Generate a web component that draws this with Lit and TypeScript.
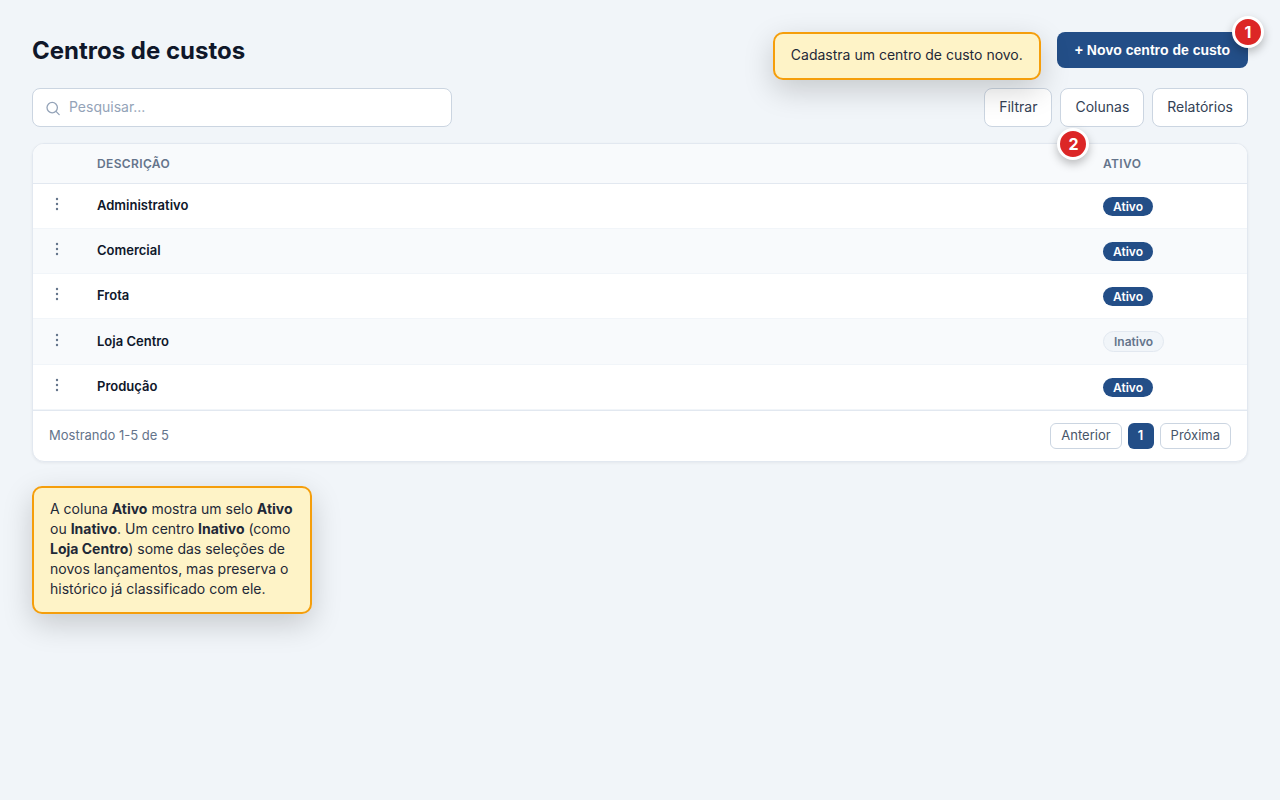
import { LitElement, html, css } from "lit";
import { customElement, state } from "lit/decorators.js";

interface CostCenter {
  name: string;
  active: boolean;
}

@customElement("app-root")
export class AppRoot extends LitElement {
  @state() private rows: CostCenter[] = [
    { name: "Administrativo", active: true },
    { name: "Comercial", active: true },
    { name: "Frota", active: true },
    { name: "Loja Centro", active: false },
    { name: "Produção", active: true },
  ];

  static styles = css`
    :host {
      display: block;
      box-sizing: border-box;
      min-height: 100vh;
      padding: 32px;
      background: #f1f5f9;
      color: #0f172a;
      font-family: Inter, "Liberation Sans", sans-serif;
      font-size: 14px;
      line-height: 20px;
    }
    *,
    *::before {
      box-sizing: border-box;
    }
    button,
    input {
      font: inherit;
      margin: 0;
    }
    button {
      cursor: pointer;
    }
    .header,
    .toolbar,
    .footer {
      display: flex;
      align-items: center;
      justify-content: space-between;
    }
    .header {
      align-items: flex-start;
      margin-bottom: 18px;
    }
    h1 {
      margin: 0;
      font-size: 24px;
      line-height: 38px;
      font-weight: 700;
    }
    .anchor {
      position: relative;
      display: flex;
    }
    .primary {
      height: 36px;
      padding: 0 18px;
      border: 0;
      border-radius: 8px;
      background: #234e87;
      color: #fff;
      font-family: "Liberation Sans", Arial, sans-serif;
      font-weight: 600;
    }
    .toolbar {
      margin-bottom: 16px;
      gap: 16px;
    }
    .search {
      display: flex;
      align-items: center;
      gap: 8px;
      flex: 0 1 420px;
      height: 39px;
      padding: 0 12px;
      border: 1px solid #cbd5e1;
      border-radius: 8px;
      background: #fff;
    }
    .search svg {
      flex: none;
      color: #94a3b8;
    }
    .search input {
      flex: 1;
      min-width: 0;
      padding: 0 0 2px;
      border: 0;
      outline: 0;
      background: none;
      color: #0f172a;
    }
    .search input::placeholder {
      color: #94a3b8;
      opacity: 1;
    }
    .actions {
      display: flex;
      gap: 8px;
    }
    .secondary {
      height: 39px;
      padding: 0 14px 2px;
      border: 1px solid #cbd5e1;
      border-radius: 8px;
      background: #fff;
      color: #334155;
    }
    .card {
      overflow: hidden;
      border: 1px solid #e2e8f0;
      border-radius: 12px;
      background: #fff;
      box-shadow: 0 1px 3px rgba(15, 23, 42, 0.06);
    }
    table {
      width: 100%;
      border-collapse: separate;
      border-spacing: 0;
      table-layout: fixed;
    }
    th,
    td {
      padding: 12px 16px;
      text-align: left;
      vertical-align: middle;
    }
    th {
      height: 40px;
      padding: 0 16px;
      border-bottom: 1px solid #e2e8f0;
      background: #f8fafc;
      color: #64748b;
      font-size: 12px;
      line-height: 16px;
      font-weight: 600;
      letter-spacing: 0.03em;
      text-transform: uppercase;
    }
    td {
      height: 45px;
      border-bottom: 1px solid #f1f5f9;
    }
    tbody tr:nth-child(even) td {
      background: #f8fafc;
    }
    .col-menu {
      width: 48px;
    }
    .col-status {
      width: 160px;
    }
    td.menu {
      padding: 0;
      text-align: center;
    }
    .dots {
      display: inline-flex;
      padding: 4px 8px 8px;
      border: 0;
      background: none;
      color: #64748b;
    }
    td.name {
      padding-bottom: 14px;
      font-size: 13px;
      line-height: 18px;
      font-weight: 600;
    }
    .pill {
      display: block;
      width: fit-content;
      padding: 2px 10px;
      border-radius: 999px;
      background: #234e87;
      color: #fff;
      font-size: 12px;
      line-height: 15px;
      font-weight: 600;
    }
    .pill.off {
      border: 1px solid #e2e8f0;
      background: #f1f5f9;
      color: #64748b;
    }
    .footer {
      padding: 12px 16px;
      border-top: 1px solid #e2e8f0;
      color: #64748b;
      font-size: 13px;
    }
    .summary {
      padding-bottom: 2px;
    }
    .pages {
      display: flex;
      gap: 6px;
    }
    .page {
      min-width: 26px;
      height: 26px;
      padding: 0 10px 2px;
      border: 1px solid #cbd5e1;
      border-radius: 6px;
      background: #fff;
      color: #475569;
    }
    .page.current {
      border: 0;
      padding: 0 8px 2px;
      background: #234e87;
      color: #fff;
      font-weight: 600;
    }
    .note {
      width: fit-content;
      max-width: 280px;
      padding: 11px 16px 13px;
      border: 2px solid #f59e0b;
      border-radius: 10px;
      background: #fef3c7;
      color: #1f2937;
      box-shadow: 0 10px 30px rgba(0, 0, 0, 0.18);
    }
    .note.beside {
      position: absolute;
      z-index: 1;
      top: 0;
      right: calc(100% + 16px);
      white-space: nowrap;
    }
    .note.below {
      margin-top: 24px;
    }
    .marker {
      position: absolute;
      z-index: 2;
      display: grid;
      place-items: center;
      width: 32px;
      height: 32px;
      border: 3px solid #fff;
      border-radius: 50%;
      background: #dc2626;
      color: #fff;
      font-size: 16px;
      font-weight: 700;
      box-shadow: 0 4px 10px rgba(0, 0, 0, 0.25);
    }
    .marker.corner {
      top: -16px;
      right: -16px;
    }
    .marker.under {
      top: 40px;
      left: -3px;
    }
  `;

  private renderRow(row: CostCenter) {
    return html`<tr>
      <td class="menu">
        <button class="dots" aria-label="Ações de ${row.name}">
          <svg width="4" height="14" viewBox="0 0 4 14" fill="currentColor">
            <circle cx="2" cy="2" r="1.2" />
            <circle cx="2" cy="7" r="1.2" />
            <circle cx="2" cy="12" r="1.2" />
          </svg>
        </button>
      </td>
      <td class="name">${row.name}</td>
      <td>
        <span class="pill ${row.active ? "" : "off"}">${row.active ? "Ativo" : "Inativo"}</span>
      </td>
    </tr>`;
  }

  render() {
    return html`
      <header class="header">
        <h1>Centros de custos</h1>
        <div class="anchor">
          <div class="note beside">Cadastra um centro de custo novo.</div>
          <button class="primary">+ Novo centro de custo</button>
          <span class="marker corner">1</span>
        </div>
      </header>
      <div class="toolbar">
        <label class="search">
          <svg width="16" height="16" viewBox="0 0 16 16" fill="none" stroke="currentColor" stroke-width="1.3" stroke-linecap="round">
            <circle cx="7.2" cy="7.6" r="5.2" />
            <path d="M11 11.4 14.2 14.6" />
          </svg>
          <input type="search" placeholder="Pesquisar..." aria-label="Pesquisar" />
        </label>
        <div class="actions">
          <button class="secondary">Filtrar</button>
          <div class="anchor">
            <button class="secondary">Colunas</button>
            <span class="marker under">2</span>
          </div>
          <button class="secondary">Relatórios</button>
        </div>
      </div>
      <section class="card">
        <table>
          <thead>
            <tr>
              <th class="col-menu"></th>
              <th>Descrição</th>
              <th class="col-status">Ativo</th>
            </tr>
          </thead>
          <tbody>
            ${this.rows.map((row) => this.renderRow(row))}
          </tbody>
        </table>
        <div class="footer">
          <span class="summary">Mostrando 1-5 de 5</span>
          <nav class="pages" aria-label="Paginação">
            <button class="page">Anterior</button>
            <button class="page current" aria-current="page">1</button>
            <button class="page">Próxima</button>
          </nav>
        </div>
      </section>
      <aside class="note below">
        A coluna <b>Ativo</b> mostra um selo <b>Ativo</b> ou <b>Inativo</b>. Um centro
        <b>Inativo</b> (como <b>Loja Centro</b>) some das seleções de novos lançamentos, mas
        preserva o histórico já classificado com ele.
      </aside>
    `;
  }
}
